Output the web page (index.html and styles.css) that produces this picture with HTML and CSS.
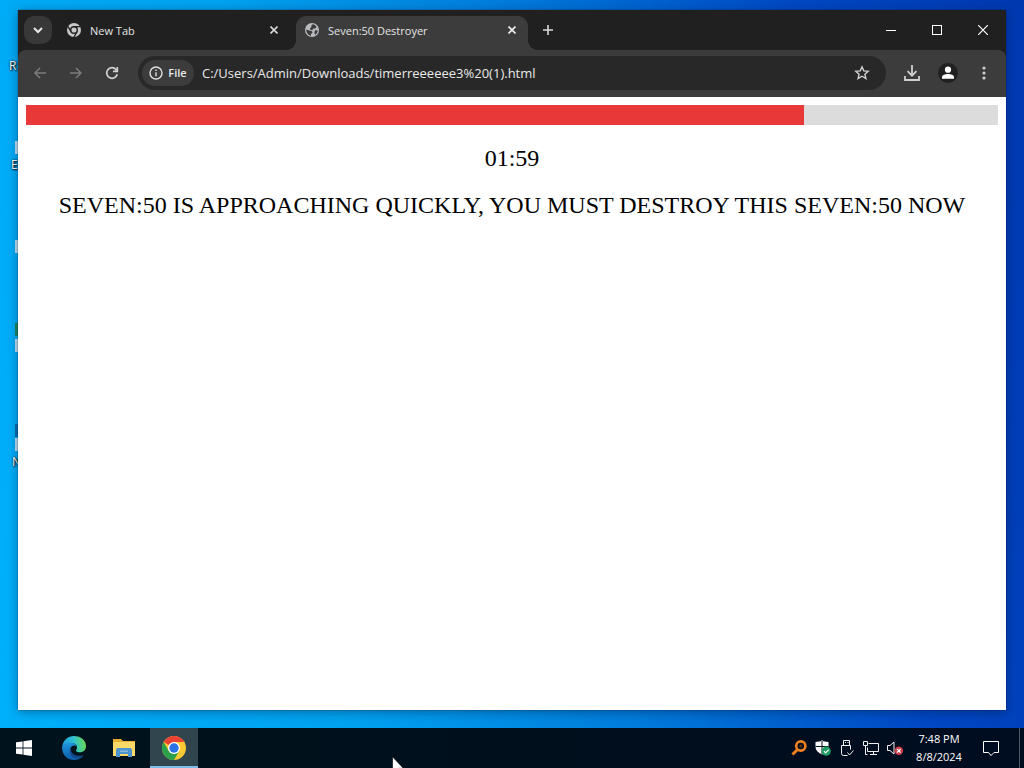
FILE: index.html
```html
<!DOCTYPE html>
<html lang="en">

<head>
    <meta charset="UTF-8">
    <title>Seven:50 Destroyer</title>
    <link rel="stylesheet" href="styles.css">
</head>

<body>
    <div class="desktop">
        <div class="shortcut shortcut-bin">R</div>
        <div class="shortcut shortcut-edge">E</div>
        <div class="shortcut shortcut-last">N</div>
        <div class="badge badge-1"></div>
        <div class="badge badge-2"></div>
        <div class="badge badge-3"></div>
        <div class="badge badge-4"></div>

        <div class="window">
            <div class="tabstrip">
                <button class="tab-search" aria-label="Search tabs">
                    <svg width="12" height="12" viewBox="0 0 12 12" fill="none" stroke="#e8e8e8" stroke-width="2"><path d="M2 4l4 4 4-4"/></svg>
                </button>
                <div class="tab">
                    <svg width="16" height="16" viewBox="0 0 16 16">
                        <circle cx="8" cy="8" r="7" fill="#c8c8c8"/>
                        <circle cx="8" cy="8" r="3.3" fill="#c8c8c8" stroke="#202020" stroke-width="1.4"/>
                        <path d="M8 4.6h6.2M5 9.7L1.9 4.4M11 9.7L8 15" stroke="#202020" stroke-width="1.3"/>
                    </svg>
                    <span class="tab-title">New Tab</span>
                    <button class="tab-close" aria-label="Close tab">
                        <svg width="8" height="8" viewBox="0 0 8 8" stroke="#d8d8d8" stroke-width="1.6"><path d="M.5.5l7 7M7.5.5l-7 7"/></svg>
                    </button>
                </div>
                <div class="tab tab-active">
                    <svg width="16" height="16" viewBox="0 0 16 16">
                        <circle cx="8" cy="8" r="7" fill="#b8bbbf"/>
                        <path d="M8.6 2.2c1.8.3 3.2 1.3 4 2.7l-1.2 1.5-2 .2-1.2 1.6-1.9-.4-.3-1.6 1.2-1 .2-1.5z" fill="#3c3c3c"/>
                        <path d="M2.2 7.6l3.3 1 2.6.6.4 1.5-1.5 1.3-.1 1.9C4.2 13.2 2.2 10.9 2.2 7.6zM11 8.3l2.8.2c-.2 1.8-1.2 3.3-2.5 4.2l-1-1.7z" fill="#3c3c3c"/>
                    </svg>
                    <span class="tab-title">Seven:50 Destroyer</span>
                    <button class="tab-close" aria-label="Close tab">
                        <svg width="8" height="8" viewBox="0 0 8 8" stroke="#f0f0f0" stroke-width="1.6"><path d="M.5.5l7 7M7.5.5l-7 7"/></svg>
                    </button>
                </div>
                <button class="new-tab" aria-label="New tab">
                    <svg width="12" height="12" viewBox="0 0 12 12" stroke="#d8d8d8" stroke-width="1.6"><path d="M6 1v10M1 6h10"/></svg>
                </button>
                <div class="window-controls">
                    <button aria-label="Minimize"><svg width="10" height="10" viewBox="0 0 10 10" stroke="#fff"><path d="M0 5.5h10"/></svg></button>
                    <button aria-label="Maximize"><svg width="10" height="10" viewBox="0 0 10 10" stroke="#fff" fill="none"><rect x=".5" y=".5" width="9" height="9"/></svg></button>
                    <button aria-label="Close"><svg width="10" height="10" viewBox="0 0 10 10" stroke="#fff" stroke-width="1.2"><path d="M0 0l10 10M10 0L0 10"/></svg></button>
                </div>
            </div>

            <div class="toolbar-back">
                <div class="toolbar">
                    <button class="tool" aria-label="Back">
                        <svg width="12" height="12" viewBox="0 0 12 12" fill="none" stroke="#7c7c7c" stroke-width="1.5"><path d="M12 6H1M6 1L1 6l5 5"/></svg>
                    </button>
                    <button class="tool" aria-label="Forward">
                        <svg width="12" height="12" viewBox="0 0 12 12" fill="none" stroke="#7c7c7c" stroke-width="1.5"><path d="M0 6h11M6 1l5 5-5 5"/></svg>
                    </button>
                    <button class="tool" aria-label="Reload">
                        <svg width="14" height="14" viewBox="0 0 14 14" fill="none" stroke="#d0d0d0" stroke-width="1.7"><path d="M12.2 8.2A5.3 5.3 0 1 1 11 3.5l1.2 1.4M12.3 1v4.3H8"/></svg>
                    </button>
                    <div class="omnibox">
                        <button class="chip">
                            <svg width="14" height="14" viewBox="0 0 14 14" fill="none" stroke="#e0e0e0" stroke-width="1.4"><circle cx="7" cy="7" r="6"/><path d="M7 6.2v4M7 3.6v1.5"/></svg>
                            File
                        </button>
                        <input class="url" type="text" aria-label="Address" value="C:/Users/Admin/Downloads/timerreeeeee3%20(1).html">
                        <button class="star" aria-label="Bookmark this tab">
                            <svg width="16" height="16" viewBox="0 0 16 16" fill="none" stroke="#d0d0d0" stroke-width="1.4"><path d="M8 1.9l1.8 4 4.4.4-3.3 2.9 1 4.3L8 11.2l-3.9 2.3 1-4.3-3.3-2.9 4.4-.4z"/></svg>
                        </button>
                    </div>
                    <button class="tool" aria-label="Downloads">
                        <svg width="16" height="16" viewBox="0 0 16 16" fill="none" stroke="#d0d0d0" stroke-width="1.8"><path d="M8 0v10.5M3.5 6.2L8 10.7l4.5-4.5M1 11v4h14v-4"/></svg>
                    </button>
                    <button class="tool" aria-label="Profile">
                        <svg width="20" height="20" viewBox="0 0 20 20"><circle cx="10" cy="10" r="10" fill="#202020"/><circle cx="10" cy="6.7" r="3.1" fill="#fff"/><path d="M4 15.7v-1.5c0-2.2 3-3.3 6-3.3s6 1.1 6 3.3v1.5z" fill="#fff"/></svg>
                    </button>
                    <button class="tool" aria-label="Menu">
                        <svg width="4" height="16" viewBox="0 0 4 16" fill="#d0d0d0"><circle cx="2" cy="3" r="1.6"/><circle cx="2" cy="8" r="1.6"/><circle cx="2" cy="13" r="1.6"/></svg>
                    </button>
                </div>
            </div>

            <div class="page">
                <div class="progress">
                    <div class="progress-fill" style="width: 80%"></div>
                </div>
                <p>01:59</p>
                <p>SEVEN:50 IS APPROACHING QUICKLY, YOU MUST DESTROY THIS SEVEN:50 NOW</p>
            </div>
        </div>
    </div>

    <div class="taskbar">
        <button class="task" aria-label="Start">
            <svg width="16" height="16" viewBox="0 0 16 16" fill="#fff"><path d="M0 2.3L6.6 1.4v6.2H0zM7.4 1.3L16 0v7.6H7.4zM0 8.4h6.6v6.2L0 13.7zM7.4 8.4H16V16l-8.6-1.2z"/></svg>
        </button>
        <button class="task" aria-label="Edge">
            <svg width="24" height="24" viewBox="0 0 24 24">
                <defs>
                    <linearGradient id="edge-top" x1="0" y1="0.5" x2="1" y2="0.4"><stop offset="0" stop-color="#1c9fe0"/><stop offset=".5" stop-color="#2fc0d0"/><stop offset="1" stop-color="#6adb50"/></linearGradient>
                    <linearGradient id="edge-low" x1="0" y1="0" x2="0" y2="1"><stop offset="0" stop-color="#2098e0"/><stop offset="1" stop-color="#0c5aa8"/></linearGradient>
                </defs>
                <path d="M.2 11C.8 4.5 5.8 0 12 0c7 0 12 4.8 12 10.3 0 3.7-2.8 6-6 6-2.6 0-4-.9-4-1.9 0-.8 1-1.2 1-3 0-2.4-2.4-4.3-6-4.3-4 0-7.5 1.7-8.8 3.9z" fill="url(#edge-top)"/>
                <path d="M.1 11C1.3 7.7 4.7 6.4 8 6.4c3.5 0 6 1.8 6.8 4.2-1-1-3-1.5-4.6-.5-2.7 1.8-2.8 6.2.8 9.2 3 2.5 7.5 2.4 10.5-.4-2 3.2-5.3 5.1-9.5 5.1C5.4 24-.4 18.5.1 11z" fill="url(#edge-low)"/>
                <path d="M8.9 11.2c-2.3 3.1-1.3 8.1 2.5 10.2 3.6 1.9 7.7.6 10.1-2.5-5 2-10.5.2-12-3.2-.7-1.6-.8-3.2-.6-4.5z" fill="#12478c"/>
            </svg>
        </button>
        <button class="task" aria-label="File Explorer">
            <svg width="22" height="20" viewBox="0 0 22 20">
                <path d="M0 1h8l2 2h12v15H0z" fill="#e8b030"/>
                <path d="M0 4h22v14H0z" fill="#fbd968"/>
                <path d="M3 12.5c0-1.5.8-2.5 2-2.5h12c1.2 0 2 1 2 2.5V19h-4v-3H7v3H3z" fill="#4c94d0"/>
                <path d="M7 12.5h8V14H7z" fill="#8cb8dc"/>
            </svg>
        </button>
        <button class="task task-active" aria-label="Chrome">
            <svg width="24" height="24" viewBox="0 0 24 24">
                <circle cx="12" cy="12" r="12" fill="#fcc934"/>
                <path d="M12 12L1.6 6A12 12 0 0 1 22.4 6H12z" fill="#ea4335"/>
                <path d="M1.6 6A12 12 0 0 0 12 24l5.2-9L12 12 6.8 15z" fill="#2aa04a"/>
                <circle cx="12" cy="12" r="6" fill="#fff"/>
                <circle cx="12" cy="12" r="4.7" fill="#2b72e8"/>
            </svg>
        </button>

        <div class="tray">
            <div class="tray-icon">
                <svg width="16" height="16" viewBox="0 0 16 16" fill="none" stroke="#f08020"><circle cx="9.8" cy="6" r="4.6" stroke-width="2.6"/><path d="M6.5 9.5l-5 5" stroke-width="3"/><circle cx="9.8" cy="6" r="1.5" fill="#5c3010" stroke="none"/></svg>
            </div>
            <div class="tray-icon">
                <svg width="16" height="16" viewBox="0 0 16 16"><path d="M7 0l1.2 1.2 5.3.8v5c0 3-2.5 5.500-6.5 7.5C3 12.500.5 10 .5 7V2l5.3-.8z" fill="#fff"/><path d="M7 1v13M.5 6.5h13" stroke="#060e18"/><circle cx="11.2" cy="11.2" r="4.6" fill="#1f9d62"/><path d="M8.900 11.2l1.7 1.7 3-3.2" fill="none" stroke="#fff" stroke-width="1.2"/></svg>
            </div>
            <div class="tray-icon">
                <svg width="16" height="18" viewBox="0 0 16 18" fill="none" stroke="#f0f0f0"><path d="M4.5 6.5v-5h6v5M2.5 6.5h9v4M2.5 6.5v8q0 2 2 2h4M6 3.5h1M8.5 3.5h1"/><path d="M8.5 13.5l2 2.5 4-4.5"/></svg>
            </div>
            <div class="tray-icon">
                <svg width="16" height="16" viewBox="0 0 16 16" fill="none" stroke="#f0f0f0"><path d="M5.5 3.5h10v8h-11v-4M10.5 11.5v3M7 14.5h7M.5 1.5h4v4h-4zM2.5 5.5v9h2"/></svg>
            </div>
            <div class="tray-icon">
                <svg width="16" height="16" viewBox="0 0 16 16"><path d="M.5 5.5H3L7 2v12l-4-3.5H.5z" fill="none" stroke="#f0f0f0"/><circle cx="11.8" cy="10.8" r="4.2" fill="#d23c48"/><path d="M10 9l3.6 3.6M13.6 9L10 12.6" stroke="#fff" stroke-width="1.3"/></svg>
            </div>
        </div>
        <div class="clock">
            <div>7:48 PM</div>
            <div>8/8/2024</div>
        </div>
        <button class="notifications" aria-label="Notifications">
            <svg width="16" height="16" viewBox="0 0 16 16" fill="none" stroke="#fff"><path d="M.5 1.5h15v11H11l-3 3-2.500-3h-5z"/></svg>
        </button>
        <button class="show-desktop" aria-label="Show desktop"></button>
    </div>

    <svg class="cursor" width="12" height="19" viewBox="0 0 12 19"><path d="M.5.7v15.800l3.600-3.500 2.300 5.300 2-.9-2.300-5.100h5.200z" fill="#fff" stroke="#000" stroke-width=".6"/></svg>
</body>

</html>
```

FILE: styles.css
```css
* {
    box-sizing: border-box;
}
body {
    margin: 0;
    height: 100vh;
    display: flex;
    flex-direction: column;
    overflow: hidden;
    font-family: "Open Sans", "Noto Sans", sans-serif;
    font-size: 11px;
}
button {
    display: flex;
    align-items: center;
    justify-content: center;
    flex-shrink: 0;
    padding: 0;
    border: none;
    background: none;
    font: inherit;
    color: inherit;
}

/* desktop */
.desktop {
    position: relative;
    flex: 1;
    min-height: 0;
    display: flex;
    padding: 10px 18px 18px;
    background: linear-gradient(80deg, #00b0fa 0%, #00a2f0 30%, #007cdc 55%, #0048c4 80%, #0038b0 100%);
}
.shortcut {
    position: absolute;
    left: 9px;
    color: #fff;
    font-size: 12px;
    line-height: 16px;
    text-shadow: 1px 1px 2px #000, 0 0 2px #000;
}
.shortcut-bin {
    top: 58px;
}
.shortcut-edge {
    top: 157px;
    left: 11px;
}
.shortcut-last {
    top: 454px;
    left: 12px;
}
.badge {
    position: absolute;
    left: 15px;
    width: 3px;
    height: 13px;
    background: #c4e2f4;
}
.badge-1 {
    top: 141px;
}
.badge-2 {
    top: 240px;
}
.badge-3 {
    top: 339px;
    box-shadow: 0 -16px 0 #1c8a60;
}
.badge-4 {
    top: 438px;
    box-shadow: 0 -14px 0 #0870b4;
}

/* browser window */
.window {
    position: relative;
    flex: 1;
    min-width: 0;
    display: flex;
    flex-direction: column;
    background: #fff;
    box-shadow: 0 0 1px rgba(0, 20, 50, 0.9), 0 2px 10px rgba(0, 20, 50, 0.4);
}
.tabstrip {
    display: flex;
    align-items: center;
    height: 40px;
    padding-left: 6px;
    background: #202020;
    color: #e4e4e4;
}
.tab-search {
    width: 28px;
    height: 28px;
    border-radius: 10px;
    background: #383838;
}
.tab {
    display: flex;
    align-items: center;
    align-self: flex-end;
    gap: 8px;
    width: 232px;
    height: 34px;
    padding: 0 8px 6px;
    margin-left: 6px;
}
.tab-title {
    flex: 1;
    white-space: nowrap;
}
.tab-close {
    width: 16px;
    height: 16px;
}
.tab-active {
    position: relative;
    background: #3c3c3c;
    border-radius: 10px 10px 0 0;
}
.tab-active::before,
.tab-active::after {
    content: "";
    position: absolute;
    bottom: 0;
    width: 10px;
    height: 10px;
}
.tab-active::before {
    left: -10px;
    background: radial-gradient(circle at 0 0, transparent 10px, #3c3c3c 10px);
}
.tab-active::after {
    right: -10px;
    background: radial-gradient(circle at 100% 0, transparent 10px, #3c3c3c 10px);
}
.new-tab {
    width: 28px;
    height: 28px;
    margin-left: 6px;
}
.window-controls {
    display: flex;
    margin-left: auto;
}
.window-controls button {
    width: 46px;
    height: 40px;
}
.toolbar-back {
    background: #202020;
}
.toolbar {
    display: flex;
    align-items: center;
    height: 47px;
    padding: 0 4px 2px;
    background: #3c3c3c;
    border-radius: 8px 8px 0 0;
}
.tool {
    width: 36px;
    height: 34px;
}
.omnibox {
    flex: 1;
    min-width: 0;
    display: flex;
    align-items: center;
    gap: 8px;
    height: 34px;
    margin: 0 8px;
    padding: 0 4px;
    border-radius: 17px;
    background: #282828;
    color: #e8e8e8;
}
.chip {
    gap: 5px;
    width: 52px;
    height: 26px;
    border-radius: 13px;
    background: #3c3c3c;
    font-weight: 600;
}
.url {
    flex: 1;
    min-width: 0;
    padding: 0;
    border: none;
    outline: none;
    background: none;
    color: inherit;
    font-family: inherit;
    font-size: 13px;
}
.star {
    width: 40px;
    height: 26px;
}

/* page content */
.page {
    flex: 1;
    padding: 8px;
    font-family: "Liberation Serif", "Times New Roman", serif;
    font-size: 24px;
    line-height: 27px;
    text-align: center;
    color: #000;
}
.page p {
    margin: 20px 0;
}
.progress {
    height: 20px;
    background: #dcdcdc;
}
.progress-fill {
    height: 20px;
    background: #e83838;
}

/* taskbar */
.taskbar {
    display: flex;
    align-items: center;
    gap: 2px;
    height: 40px;
    background: linear-gradient(90deg, #00131c, #000f1c 50%, #000c20);
    color: #fff;
}
.task {
    width: 48px;
    height: 40px;
}
.task-active {
    background: #31454f;
    border-bottom: 2px solid #80bce8;
    padding-top: 2px;
}
.tray {
    display: flex;
    margin-left: auto;
}
.tray-icon {
    display: flex;
    align-items: center;
    justify-content: center;
    width: 24px;
    height: 40px;
}
.clock {
    width: 60px;
    line-height: 18px;
    text-align: center;
}
.notifications {
    width: 40px;
    height: 40px;
    margin-right: 6px;
}
.show-desktop {
    width: 5px;
    height: 40px;
    border-left: 1px solid #4c5866;
}
.cursor {
    position: absolute;
    left: 392px;
    top: 756px;
}
```
